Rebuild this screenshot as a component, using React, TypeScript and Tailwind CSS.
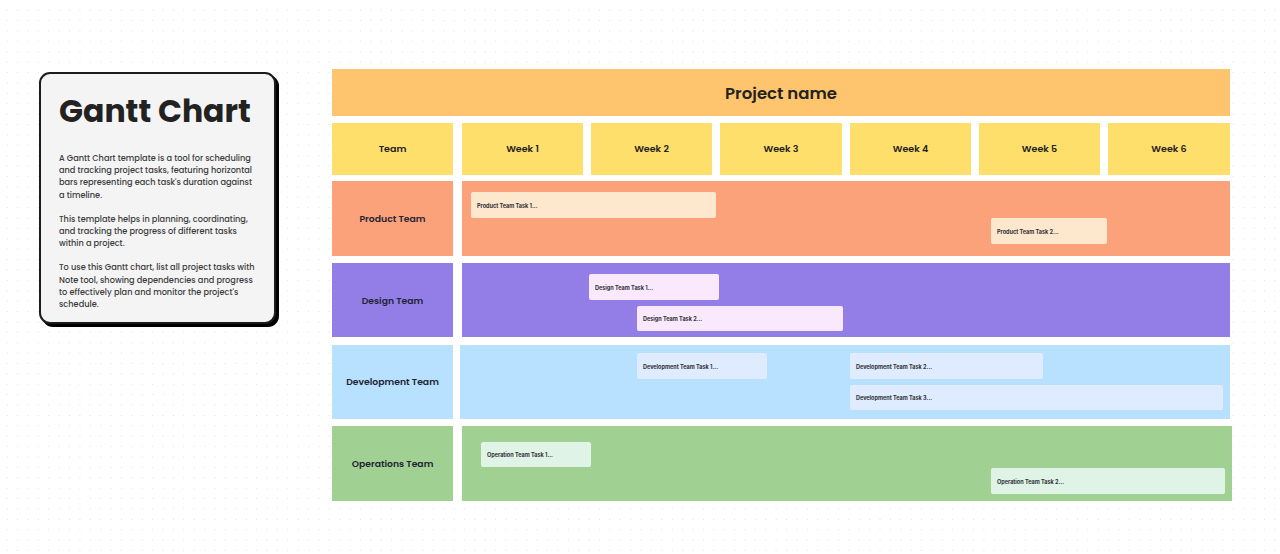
import React from 'react';

const poppins = 'font-["Poppins","Inter","Noto_Sans",sans-serif]';

interface Task {
    label: string;
    left: number;
    width: number;
}

interface TeamRow {
    name: string;
    color: string;
    barColor: string;
    rowClass: string;
    labelClass: string;
    timelineClass: string;
    lanes: { className: string; tasks: Task[] }[];
}

const weeks = [
    { label: 'Week 1', className: 'w-[121px] ml-[9px]' },
    { label: 'Week 2', className: 'w-[121px] ml-[8px]' },
    { label: 'Week 3', className: 'w-[122px] ml-[8px]' },
    { label: 'Week 4', className: 'w-[121px] ml-[8px]' },
    { label: 'Week 5', className: 'w-[121px] ml-[8px]' },
    { label: 'Week 6', className: 'w-[122px] ml-[8px]' },
];

const rows: TeamRow[] = [
    {
        name: 'Product Team',
        color: 'bg-[#fca27b]',
        barColor: 'bg-[#fee8cd]',
        rowClass: 'h-[75px] mt-[6px]',
        labelClass: 'pt-[1px]',
        timelineClass: 'ml-[9px] w-[768px] pt-[11px]',
        lanes: [
            { className: '', tasks: [{ label: 'Product Team Task 1...', left: 9, width: 245 }] },
            { className: 'mt-[0.5px]', tasks: [{ label: 'Product Team Task 2...', left: 529, width: 116 }] },
        ],
    },
    {
        name: 'Design Team',
        color: 'bg-[#937ee8]',
        barColor: 'bg-[#fae8fd]',
        rowClass: 'h-[74px] mt-[7px]',
        labelClass: 'pt-[1px]',
        timelineClass: 'ml-[9px] w-[768px] pt-[11px]',
        lanes: [
            { className: '', tasks: [{ label: 'Design Team Task 1...', left: 127, width: 130 }] },
            { className: 'mt-[6px]', tasks: [{ label: 'Design Team Task 2...', left: 175, width: 206 }] },
        ],
    },
    {
        name: 'Development Team',
        color: 'bg-[#b7e1fe]',
        barColor: 'bg-[#dfebfe]',
        rowClass: 'h-[74px] mt-[8px]',
        labelClass: '',
        timelineClass: 'ml-[7px] w-[770px] pt-[8px]',
        lanes: [
            {
                className: '',
                tasks: [
                    { label: 'Development Team Task 1...', left: 177, width: 130 },
                    { label: 'Development Team Task 2...', left: 83, width: 193 },
                ],
            },
            { className: 'mt-[6px]', tasks: [{ label: 'Development Team Task 3...', left: 390, width: 373 }] },
        ],
    },
    {
        name: 'Operations Team',
        color: 'bg-[#a0d193]',
        barColor: 'bg-[#dff3e6]',
        rowClass: 'h-[75px] mt-[7px]',
        labelClass: 'pt-[1px]',
        timelineClass: 'ml-[9px] w-[770px] pt-[15.5px]',
        lanes: [
            { className: '', tasks: [{ label: 'Operation Team Task 1...', left: 19, width: 110 }] },
            { className: 'mt-[1px]', tasks: [{ label: 'Operation Team Task 2...', left: 529, width: 234 }] },
        ],
    },
];

const TaskBar: React.FC<{ task: Task; color: string }> = ({ task, color }) => (
    <div
        className={`${color} h-[25.5px] rounded-[2px] flex items-center pl-[6px] pt-[2px] shrink-0 font-["Inter",sans-serif] text-[5.5px] font-bold text-[#2f3136] whitespace-nowrap`}
        style={{ marginLeft: task.left, width: task.width }}
    >
        {task.label}
    </div>
);

const InfoCard: React.FC = () => (
    <div className={`${poppins} w-[237px] h-[252px] mt-[72px] ml-[39px] shrink-0 rounded-[11px] border-2 border-[#1c1c1c] bg-[#f4f4f4] shadow-[3px_3px_0_#000] pl-[18px] pt-[12px]`}>
        <h1 className="text-[31.5px] leading-[50px] font-bold text-[#222222] whitespace-nowrap">Gantt Chart</h1>
        <div className="mt-[16px] w-[197px] text-[8.2px] leading-[12.2px] text-[#3c3c3c] font-medium flex flex-col gap-[12px]">
            <p>A Gantt Chart template is a tool for scheduling and tracking project tasks, featuring horizontal bars representing each task's duration against a timeline.</p>
            <p>This template helps in planning, coordinating, and tracking the progress of different tasks within a project.</p>
            <p>To use this Gantt chart, list all project tasks with Note tool, showing dependencies and progress to effectively plan and monitor the project's schedule.</p>
        </div>
    </div>
);

export default function App() {
    return (
        <div className="w-[1280px] h-[554px] overflow-hidden bg-white bg-[radial-gradient(#dcdde2_0.7px,transparent_0.9px)] bg-[size:10.4px_10.4px] bg-[position:2px_5px] flex">
            <InfoCard />
            <div className={`${poppins} ml-[56px] mt-[69px] w-[900px] h-[432px] bg-white shrink-0`}>
                <div className="w-[898px] h-[47px] pt-[3px] bg-[#fec56e] flex items-center justify-center text-[16.5px] font-semibold text-[#222222]">
                    Project name
                </div>
                <div className="flex h-[52px] mt-[7px]">
                    <div className="w-[121px] pt-[1px] bg-[#ffdf6b] flex items-center justify-center text-[9.5px] font-semibold text-[#222222]">Team</div>
                    {weeks.map(week => (
                        <div key={week.label} className={`${week.className} pt-[1px] bg-[#ffdf6b] flex items-center justify-center text-[9.5px] font-semibold text-[#222222]`}>
                            {week.label}
                        </div>
                    ))}
                </div>
                {rows.map(row => (
                    <div key={row.name} className={`flex ${row.rowClass}`}>
                        <div className={`w-[121px] ${row.labelClass} ${row.color} flex items-center justify-center text-[9.25px] font-semibold text-[#222433]`}>
                            {row.name}
                        </div>
                        <div className={`${row.color} ${row.timelineClass}`}>
                            {row.lanes.map((lane, i) => (
                                <div key={i} className={`flex ${lane.className}`}>
                                    {lane.tasks.map(task => (
                                        <TaskBar key={task.label} task={task} color={row.barColor} />
                                    ))}
                                </div>
                            ))}
                        </div>
                    </div>
                ))}
            </div>
        </div>
    );
}
